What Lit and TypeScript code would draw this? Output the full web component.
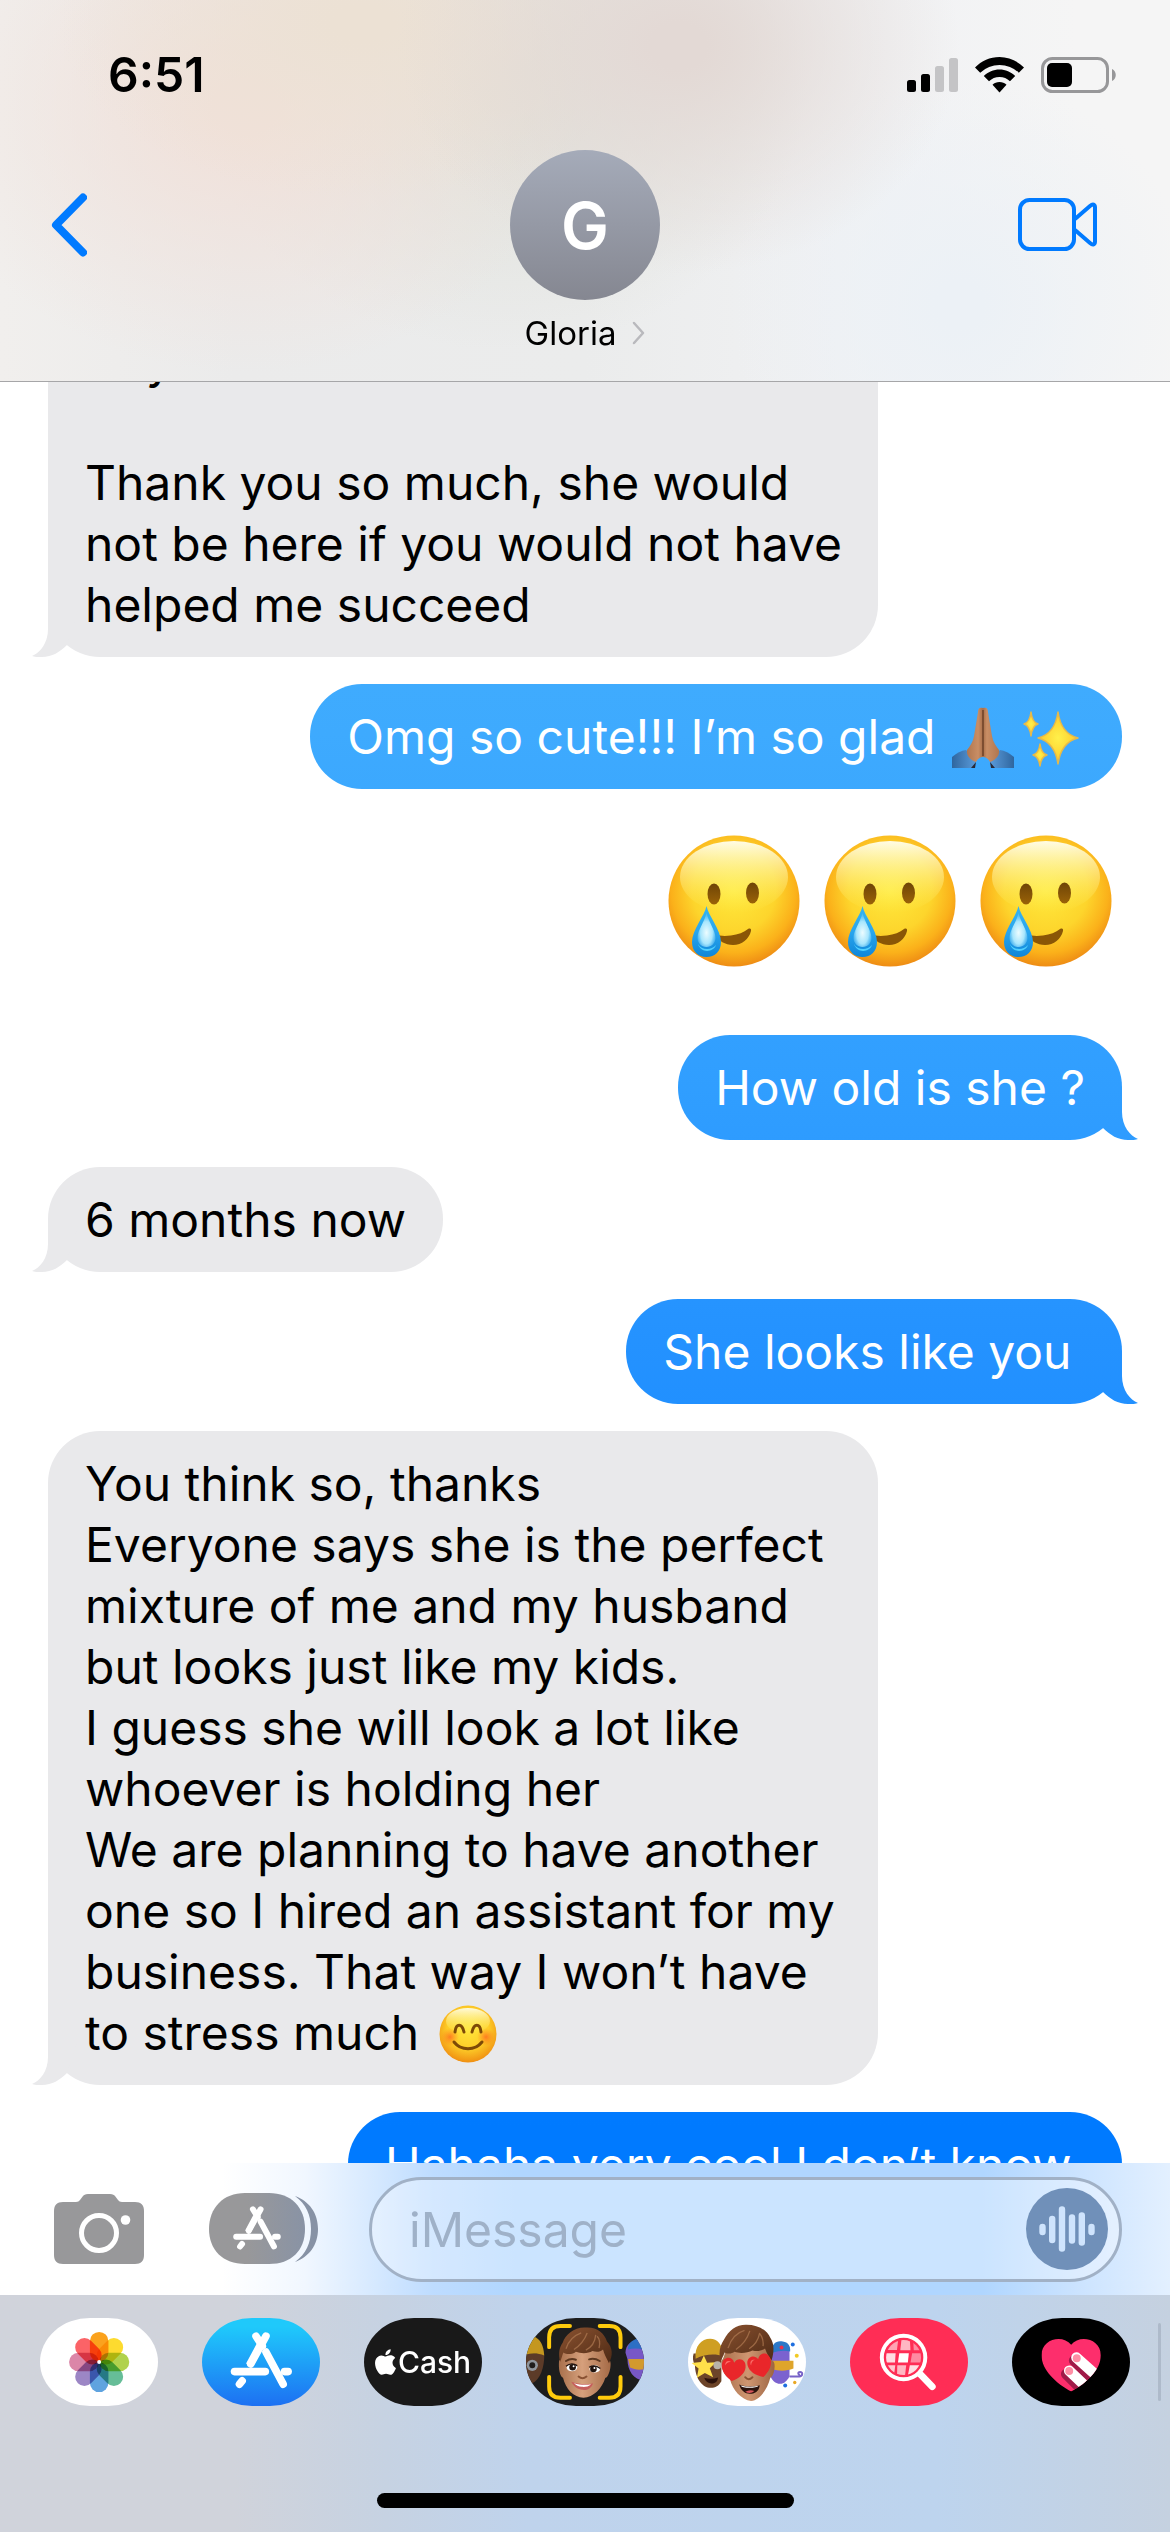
import { LitElement, html, svg, css } from "lit";
import type { TemplateResult } from "lit";
import { customElement, property } from "lit/decorators.js";
import { classMap } from "lit/directives/class-map.js";

/* ---------- Emoji drawings (no outer whitespace: bubbles keep line breaks) ---------- */

const tearEmoji = html`<svg class="emoji-big" viewBox="0 0 132 132" role="img" aria-label="Smiling face with tear">
    <defs>
      <radialGradient id="t-face" cx="50%" cy="42%" r="58%">
        <stop offset="0" stop-color="#ffea3d" />
        <stop offset=".55" stop-color="#fdd52c" />
        <stop offset=".82" stop-color="#fbb11a" />
        <stop offset="1" stop-color="#ee8c14" />
      </radialGradient>
      <linearGradient id="t-shine" x1="0" y1="0" x2="0" y2="1">
        <stop offset="0" stop-color="#fffff0" stop-opacity=".95" />
        <stop offset="1" stop-color="#fff45c" stop-opacity="0" />
      </linearGradient>
      <linearGradient id="t-eye" x1="0" y1="0" x2="0" y2="1">
        <stop offset="0" stop-color="#6f4506" />
        <stop offset="1" stop-color="#9a6208" />
      </linearGradient>
      <linearGradient id="t-tear" x1="0" y1="0" x2="0" y2="1">
        <stop offset="0" stop-color="#35b4f0" />
        <stop offset=".5" stop-color="#2aa6ee" />
        <stop offset="1" stop-color="#0f86d8" />
      </linearGradient>
      <radialGradient id="t-tear-in" cx="50%" cy="58%" r="55%">
        <stop offset="0" stop-color="#ecfcff" />
        <stop offset=".6" stop-color="#a8e6fd" />
        <stop offset="1" stop-color="#7fd2fa" stop-opacity=".3" />
      </radialGradient>
    </defs>
    <circle cx="66" cy="66" r="65.5" fill="url(#t-face)" />
    <ellipse cx="66" cy="42" rx="54" ry="36" fill="url(#t-shine)" />
    <ellipse cx="46" cy="59" rx="6.5" ry="10.5" fill="url(#t-eye)" />
    <ellipse cx="84.5" cy="58" rx="6.5" ry="10.5" fill="url(#t-eye)" />
    <path d="M46 99c6 2 10 2.500 17 1.500 7-1 13-3 17-6.500 2.500-1 3.500 0 3 2-2 8-9 14-18 14-8 0-14-4-19-11z" fill="#8a5606" />
    <path d="M38.500 71c2 10 14.500 24 14.500 36 0 9-6 15-14.500 15S24 116 24 107c0-12 12.500-26 14.500-36z" fill="url(#t-tear)" />
    <path d="M38.500 78c2 9 9 17 9 25 0 5-4 9-9 9s-9-4-9-9c0-8 7-16 9-25z" fill="url(#t-tear-in)" />
    <path d="M30 109c3 6 13 7 18 1-2 7-15 9-18-1z" fill="#4fd0ff" />
  </svg>`;

const blushEmoji = html`<svg class="emoji" viewBox="0 0 62 62" role="img" aria-label="Smiling face with smiling eyes">
    <defs>
      <radialGradient id="b-face" cx="50%" cy="40%" r="60%">
        <stop offset="0" stop-color="#ffe73c" />
        <stop offset=".6" stop-color="#fdcd28" />
        <stop offset="1" stop-color="#f08f12" />
      </radialGradient>
      <linearGradient id="b-shine" x1="0" y1="0" x2="0" y2="1">
        <stop offset="0" stop-color="#fffff0" stop-opacity=".9" />
        <stop offset="1" stop-color="#fff45c" stop-opacity="0" />
      </linearGradient>
      <radialGradient id="b-cheek">
        <stop offset="0" stop-color="#ff5a1c" stop-opacity=".7" />
        <stop offset="1" stop-color="#ff7a1c" stop-opacity="0" />
      </radialGradient>
    </defs>
    <circle cx="32" cy="31" r="28.500" fill="url(#b-face)" />
    <ellipse cx="32" cy="18" rx="22" ry="13" fill="url(#b-shine)" />
    <circle cx="14" cy="34" r="9" fill="url(#b-cheek)" />
    <circle cx="50" cy="34" r="9" fill="url(#b-cheek)" />
    <g fill="none" stroke="#7d4a07" stroke-width="3" stroke-linecap="round">
      <path d="M19 29c1-9 7-9 9 0M36 29c2-9 8-9 9 0" />
      <path d="M18 39c7 9 21 9 28 0" />
    </g>
  </svg>`;

const prayEmoji = html`<svg class="emoji" viewBox="0 0 62 62" role="img" aria-label="Folded hands">
    <defs>
      <linearGradient id="p-skin" x1="0" y1="0" x2="1" y2="0">
        <stop offset="0" stop-color="#b0764f" />
        <stop offset=".35" stop-color="#c98e65" />
        <stop offset=".5" stop-color="#a86f4a" />
        <stop offset=".62" stop-color="#c98e65" />
        <stop offset="1" stop-color="#b0764f" />
      </linearGradient>
      <linearGradient id="p-cuff-l" x1="0" y1="0" x2="1" y2="0">
        <stop offset="0" stop-color="#2f669f" />
        <stop offset="1" stop-color="#5b9bda" />
      </linearGradient>
      <linearGradient id="p-cuff-r" x1="1" y1="0" x2="0" y2="0">
        <stop offset="0" stop-color="#2f669f" />
        <stop offset="1" stop-color="#5b9bda" />
      </linearGradient>
    </defs>
    <path d="M0 50q7-6 14-7l10 12-3 6H0z" fill="url(#p-cuff-l)" />
    <path d="M62 50q-7-6-14-7L38 55l3 6h21z" fill="url(#p-cuff-r)" />
    <path d="M24 55l-5 6h4zM38 55l5 6h-4z" fill="#2a2a38" />
    <path d="M31 1c-3-1-5 0-5 4l-4 24c-1 6-4 10-7 14-1 6 4 10 9 12 2-4 5-5 7-5s5 1 7 5c5-2 10-6 9-12-3-4-6-8-7-14L36 5c0-4-2-5-5-4z" fill="url(#p-skin)" />
    <path d="M31 3v46" stroke="#6e4229" stroke-width="1.500" />
  </svg>`;

const star = (cx: number, cy: number, rx: number, ry: number) => svg`
  <path
    d="M${cx} ${cy - ry}Q${cx + rx * 0.16} ${cy - ry * 0.16} ${cx + rx} ${cy}Q${cx + rx * 0.16} ${cy + ry * 0.16} ${cx} ${cy + ry}Q${cx - rx * 0.16} ${cy + ry * 0.16} ${cx - rx} ${cy}Q${cx - rx * 0.16} ${cy - ry * 0.16} ${cx} ${cy - ry}z"
    fill="url(#s-gold)" stroke="#e6b94a" stroke-width="1.500" stroke-linejoin="round" />
`;

const sparkleEmoji = html`<svg class="emoji" viewBox="0 0 62 62" role="img" aria-label="Sparkles">
    <defs>
      <radialGradient id="s-gold">
        <stop offset="0" stop-color="#fff04a" />
        <stop offset="1" stop-color="#fdc92a" />
      </radialGradient>
    </defs>
    ${star(38, 31, 20, 26)} ${star(11, 17, 7, 12)} ${star(20, 48, 7, 11)}
  </svg>`;

/* ---------- Interface icons ---------- */

const signalIcon = html`
  <svg width="51" height="36" viewBox="0 0 51 36" aria-hidden="true">
    <rect x="0" y="23" width="9" height="12" rx="2.500" />
    <rect x="14" y="17" width="9" height="18" rx="2.500" />
    <rect x="28" y="9" width="9" height="26" rx="2.500" fill="#c4c4c6" />
    <rect x="42" y="1" width="9" height="34" rx="2.500" fill="#c4c4c6" />
  </svg>
`;

const wifiIcon = html`
  <svg width="49" height="36" viewBox="0 0 49 36" aria-hidden="true">
    <path d="M24.500 0C34 0 42.500 4 49 10.500L43.800 15.700A28 28 0 0 0 5.200 15.700L0 10.500C6.500 4 15 0 24.500 0z" />
    <path d="M24.500 12.500c6 0 11.500 2.400 15.700 6.500L35 24.200a15 15 0 0 0-21 0L8.800 19c4.200-4.100 9.700-6.500 15.700-6.500z" />
    <path d="M24.500 25c2.700 0 5.200 1 7 2.800l-7 7.700-7-7.700c1.800-1.800 4.300-2.800 7-2.800z" />
  </svg>
`;

const batteryIcon = html`
  <svg width="75" height="36" viewBox="0 0 75 36" aria-hidden="true">
    <rect x="1.500" y="1.500" width="65" height="33" rx="10" fill="none" stroke="#979799" stroke-width="3" />
    <rect x="6" y="6" width="25" height="24" rx="5" />
    <path d="M71 12c5 2 5 10 0 12z" fill="#979799" />
  </svg>
`;

const backIcon = html`
  <svg width="36" height="64" viewBox="0 0 36 64" aria-hidden="true">
    <path d="M32 4.500 5 32l27 27.500" fill="none" stroke="#007aff" stroke-width="8" stroke-linecap="round" stroke-linejoin="round" />
  </svg>
`;

const videoIcon = html`
  <svg width="80" height="54" viewBox="0 0 80 54" aria-hidden="true">
    <g fill="none" stroke="#007aff" stroke-width="4" stroke-linejoin="round">
      <rect x="2" y="2" width="54" height="49" rx="9.500" />
      <path d="M57 21 72 8c3-2.500 5-1.500 5 1.500v34c0 3-2 4-5 1.500L57 32" />
    </g>
  </svg>
`;

const nameChevron = html`
  <svg width="13" height="24" viewBox="0 0 13 24" aria-hidden="true">
    <path d="M2 2l9 10-9 10" fill="none" stroke="#b9b9bd" stroke-width="2.500" stroke-linecap="round" stroke-linejoin="round" />
  </svg>
`;

const cameraIcon = html`
  <svg width="90" height="70" viewBox="0 0 90 70" aria-hidden="true">
    <path fill="#98989a" d="M9 8h13c2 0 3-1 4-2l3-4c1-1 2-2 5-2h22c3 0 4 1 5 2l3 4c1 1 2 2 4 2h13c6 0 9 3 9 9v44c0 6-3 9-9 9H9c-6 0-9-3-9-9V17c0-6 3-9 9-9z" />
    <circle cx="45" cy="39" r="17.500" fill="none" stroke="#fff" stroke-width="5" />
    <circle cx="71.500" cy="26" r="4.800" fill="#fff" />
  </svg>
`;

/* The crossed "A" shared by the drawer button and the App Store tile. */
const storeGlyph = svg`
  <g fill="none" stroke="#fff" stroke-width="23" stroke-linecap="round">
    <path d="M798 138 752 222" />
    <path d="M768 138 787 168" />
    <path d="M798 186 850 283" />
    <path d="M703 245H796" />
    <path d="M854 245H865" />
    <path d="M726 273 718 283" />
    <path d="M780 166 748 226" stroke-linecap="butt" />
  </g>
`;

const drawerIcon = html`
  <svg width="110" height="72" viewBox="0 0 110 72" aria-hidden="true">
    <defs>
      <linearGradient id="d-fill" x1="0" y1="0" x2="1" y2="0">
        <stop offset=".4" stop-color="#98989a" />
        <stop offset="1" stop-color="#8993a5" />
      </linearGradient>
    </defs>
    <path d="M36 0H60C82 0 96 14 96 36S82 71 60 71H36C14 71 0 57 0 36S14 0 36 0z" fill="url(#d-fill)" />
    <path d="M86 3c14 5 23 17 23 33s-9 28-23 33c11-8 16-19 16-33S97 11 86 3z" fill="#8792a5" />
    <g transform="translate(48 35) scale(.257) translate(-784 -211)">${storeGlyph}</g>
  </svg>
`;

const voiceIcon = html`
  <svg width="82" height="82" viewBox="0 0 82 82" aria-hidden="true">
    <circle cx="41" cy="41" r="41" fill="#7090b9" />
    <g stroke="#cfe4fd" stroke-width="6.400" stroke-linecap="round">
      <path d="M16.500 39v5M26.200 31v21M36 21.500v39M46 29.500v23M55.800 27.500v27M65.500 39v5" />
    </g>
  </svg>
`;

/* ---------- App tiles ---------- */

const petals = ["#fba21d", "#fddb2f", "#b0d24d", "#66bd98", "#5fa3df", "#9c86c5", "#db86a8", "#fb6367"];

const photosTile = html`
  <svg class="art" viewBox="119 83 355 266" aria-hidden="true">
    <g transform="translate(297 216)">
      ${petals.map(
        (fill, i) => svg`
          <rect class="petal" x="-28" y="-91" width="56" height="90" rx="28" fill=${fill} transform="rotate(${i * 45})" />
        `,
      )}
      <circle r="6" fill="#fff" />
    </g>
  </svg>
`;

const storeTile = html`
  <svg class="art" viewBox="605 83 356 266" aria-hidden="true">${storeGlyph}</svg>
`;

const cashTile = html`
  <svg width="21" height="26" viewBox="2.200 0 19.600 24" aria-hidden="true">
    <path
      fill="#fff"
      d="M12.152 6.896c-.948 0-2.415-1.078-3.96-1.040-2.040.027-3.910 1.183-4.961 3.014-2.117 3.675-.546 9.103 1.519 12.090 1.013 1.454 2.208 3.090 3.792 3.039 1.520-.065 2.090-.987 3.935-.987 1.831 0 2.350.987 3.960.948 1.637-.026 2.676-1.480 3.676-2.948 1.156-1.688 1.636-3.325 1.662-3.415-.039-.013-3.182-1.221-3.220-4.857-.026-3.040 2.480-4.494 2.597-4.559-1.429-2.090-3.623-2.324-4.390-2.376-2-.156-3.675 1.090-4.610 1.090zM15.530 3.830c.843-1.012 1.400-2.427 1.245-3.830-1.207.052-2.662.805-3.532 1.818-.780.896-1.454 2.338-1.273 3.714 1.338.104 2.715-.688 3.559-1.701"
    />
  </svg>
  <span class="cash-word">Cash</span>
`;

const memojiTile = html`
  <svg class="art" viewBox="77 83 357 266" aria-hidden="true">
    <defs>
      <linearGradient id="m-skin" x1="0" y1="0" x2="1" y2="0">
        <stop offset="0" stop-color="#a8704c" />
        <stop offset=".45" stop-color="#d6a07c" />
        <stop offset="1" stop-color="#a56b47" />
      </linearGradient>
      <linearGradient id="m-hair" x1="0" y1="0" x2="1" y2="1">
        <stop offset="0" stop-color="#8a5230" />
        <stop offset="1" stop-color="#4e2a15" />
      </linearGradient>
    </defs>
    <path d="M70 190h62c2 36-10 78-36 90H70z" fill="#5c3b28" />
    <path d="M70 150c10-12 22-16 30-12 20 8 31 28 32 58-20-8-42-8-62 0z" fill="#c4971f" />
    <circle cx="96" cy="226" r="17" fill="#8f959c" />
    <circle cx="96" cy="226" r="9" fill="#1f1d1c" />
    <path d="M378 188c0-26 20-42 60-40v126c-34-2-54-30-54-66z" fill="#7857c6" />
    <path d="M385 178c0-22 22-38 54-34v36c-20-6-38-6-54-2z" fill="#2d6fc4" />
    <path d="M386 207h52v30c-18 4-34 2-46-4z" fill="#d29a2e" />
    <path d="M177 212c4-4 8-10 12-40h132c4 20 6 40 10 40 6 10-2 50-14 52-10 32-36 60-66 60s-54-26-62-60c-10-6-14-28-12-52z" fill="url(#m-skin)" />
    <path d="M180 216c-6-26-2-44 8-58 8-24 34-47 68-46 34-3 58 16 66 42 18 20 18 42 6 66-6-14-14-26-18-42-8 8-20 8-32 5-12 8-36 8-50 2-8 8-28 10-38 2-4 10-6 20-10 29z" fill="url(#m-hair)" />
    <g fill="none" stroke="#b07a52" stroke-width="4" opacity=".7">
      <path d="M198 176c8-26 24-40 46-48M222 178c18-12 32-28 40-50M258 180c16-8 28-26 30-46M298 174c4-16 2-28-6-36" />
    </g>
    <path d="M198 213q14-9 30-4M268 208q16-5 32 5" fill="none" stroke="#5d3820" stroke-width="6" stroke-linecap="round" />
    <ellipse cx="216" cy="233" rx="16" ry="11" fill="#fff" />
    <ellipse cx="285" cy="237" rx="16" ry="11" fill="#fff" />
    <circle cx="218" cy="232" r="10" fill="#20130e" />
    <circle cx="281" cy="237" r="10" fill="#20130e" />
    <circle cx="221" cy="229" r="3" fill="#fff" />
    <circle cx="284" cy="234" r="3" fill="#fff" />
    <path d="M198 229q16-14 34-2M268 232q18-10 34 4" fill="none" stroke="#20130e" stroke-width="4" />
    <path d="M236 260q12 10 24 0" fill="none" stroke="#8a5233" stroke-width="6" stroke-linecap="round" />
    <path d="M214 276c20 8 48 10 66 4-6 18-20 22-34 20-16-2-26-12-32-24z" fill="#c65f5c" />
    <path d="M222 280c18 5 36 6 52 3-8 8-20 9-28 8-10-1-18-5-24-11z" fill="#fff" />
    <g fill="none" stroke="#ffcb0c" stroke-width="12" stroke-linecap="round">
      <path d="M147 171v-30q0-34 34-34h29M300 107h29q34 0 34 34v30M147 261v29q0 34 34 34h29M300 324h29q34 0 34-34v-29" />
    </g>
  </svg>
`;

const heart = (x: number, y: number, turn: number) => svg`
  <path transform="translate(${x} ${y}) rotate(${turn})" fill="#e9262a"
    d="M0 36C-22 24-36 8-36-10c0-26 28-30 36-10 8-20 36-16 36 10C36 8 22 24 0 36z" />
  <path transform="translate(${x} ${y}) rotate(${turn})" fill="#ff8078" opacity=".8"
    d="M-26-8c-2-14 8-18 16-13-8 0-13 5-16 13z" />
`;

const stickerTile = html`
  <svg class="art" viewBox="563 83 357 266" aria-hidden="true">
    <defs>
      <linearGradient id="s-skin" x1="0" y1="0" x2="1" y2="0">
        <stop offset="0" stop-color="#a8704c" />
        <stop offset=".5" stop-color="#cf9671" />
        <stop offset="1" stop-color="#9c6442" />
      </linearGradient>
      <linearGradient id="s-hair" x1="0" y1="0" x2="1" y2="1">
        <stop offset="0" stop-color="#8a5230" />
        <stop offset="1" stop-color="#4e2a15" />
      </linearGradient>
    </defs>
    <path d="M580 190h84v84c-8 14-18 20-32 20-26 0-48-30-48-70-6-8-8-22-4-34z" fill="#6c4429" />
    <path d="M586 206c-4-38 18-60 44-60 22 0 36 14 40 52-26-8-56-6-84 8z" fill="#cf9f22" />
    <path d="M611 196l10 22 27-1-19 18 10 27-25-13-24 15 5-28-21-17 28-3z" fill="#ffe04a" />
    <circle cx="652" cy="226" r="12" fill="#b9b3a8" />
    <path d="M612 264c14 4 28 4 42-1-2 14-10 18-20 18s-18-6-22-17z" fill="#2c130d" />
    <path d="M820 170h50v90c-8 14-16 22-28 22-16 0-28-14-32-30z" fill="#7b62cf" />
    <path d="M818 188c-4-30 14-38 32-34 16 2 24 14 22 30-18-4-36-2-54 4z" fill="#2b78c8" />
    <path d="M818 212h64v24c-20 8-44 8-64 2z" fill="#dfa52b" />
    <path d="M870 260h30c10 0 12-14 2-14-8 0-6 10 0 8" fill="none" stroke="#7763c8" stroke-width="6" />
    <circle cx="846" cy="172" r="6" fill="#e9304c" />
    <circle cx="880" cy="163" r="6" fill="#1f6fe0" />
    <circle cx="892" cy="197" r="6" fill="#f2ca24" />
    <circle cx="857" cy="287" r="6" fill="#1f6fe0" />
    <circle cx="886" cy="278" r="5" fill="#e9a824" />
    <path d="M664 214c4-6 10-16 14-42h130c6 20 6 36 12 42 10 4 4 46-8 50-8 34-32 68-58 70-30-4-56-34-64-66-16-8-26-32-26-54z" fill="url(#s-skin)" />
    <path d="M662 214c-8-26-2-48 10-66 14-28 38-46 68-45 36 0 64 18 72 40 12 18 12 40 4 68-8-10-14-20-20-36-12 8-24 10-38 6-14 8-40 10-54 4-8 6-20 8-30 2-4 10-8 18-12 27z" fill="url(#s-hair)" />
    <g fill="none" stroke="#b07a52" stroke-width="4" opacity=".7">
      <path d="M684 174c8-26 22-46 50-54M708 178c18-12 34-30 42-56M748 176c16-10 28-28 32-48M790 168c2-16-2-28-10-38" />
    </g>
    <path d="M736 262q10 12 22 0" fill="none" stroke="#8a5233" stroke-width="6" stroke-linecap="round" />
    <path d="M718 284c20 8 44 8 62 2-2 20-16 26-30 26s-28-10-32-28z" fill="#2c130d" />
    <path d="M722 287c18 5 38 5 54 1-4 8-50 9-54-1z" fill="#fff" />
    <path d="M736 306q14-8 28-2-12 10-28 2z" fill="#d4545a" />
    ${heart(700, 238, 8)} ${heart(781, 227, -16)}
  </svg>
`;

const searchTile = html`
  <svg class="art" viewBox="89 472 357 267" aria-hidden="true">
    <defs><clipPath id="lens"><circle cx="251" cy="592" r="53" /></clipPath></defs>
    <circle cx="251" cy="592" r="66" fill="none" stroke="#fff" stroke-width="12" />
    <path d="M303 644l35 36" stroke="#fff" stroke-width="21" stroke-linecap="round" />
    <g clip-path="url(#lens)">
      <path d="M196 535h39l-4 34h-35z" fill="#ffa3b3" />
      <path d="M245 535h25l2 35h-31z" fill="#ffb7c3" />
      <path d="M280 535h30v35h-28z" fill="#ff8aa1" />
      <path d="M196 579h31l-2 28h-29z" fill="#ffdde2" />
      <path d="M238 579h29l-3 28h-30z" fill="#fff" />
      <path d="M277 579h30v28h-35z" fill="#ff8aa1" />
      <path d="M196 615h30l-4 30h-26z" fill="#ffc8d0" />
      <path d="M232 615h27l-4 35h-24z" fill="#ffb7c3" />
      <path d="M270 615h34v32h-40z" fill="#ffdfe4" />
    </g>
  </svg>
`;

const heartTile = html`
  <svg class="art" viewBox="574 472 357 267" aria-hidden="true">
    <defs>
      <clipPath id="big-heart">
        <path d="M753 695c-44-24-90-64-90-110 0-50 64-64 90-32 26-32 90-18 90 32 0 46-46 86-90 110z" />
      </clipPath>
    </defs>
    <g clip-path="url(#big-heart)">
      <rect x="660" y="530" width="190" height="170" fill="#fd2e6c" />
      <path d="M762 601l70 72M738 642l60 60" stroke="#a01a48" stroke-width="32" stroke-linecap="round" />
      <path d="M769 592l80 72M747 632l80 76" stroke="#fff" stroke-width="32" stroke-linecap="round" />
      <circle cx="770" cy="594" r="12" fill="#ff8ea5" />
      <circle cx="747" cy="633" r="12" fill="#ff8ea5" />
    </g>
  </svg>
`;

interface AppTile {
  id: string;
  label: string;
  art: TemplateResult;
}

const tiles: AppTile[] = [
  { id: "photos", label: "Photos", art: photosTile },
  { id: "store", label: "App Store", art: storeTile },
  { id: "cash", label: "Apple Cash", art: cashTile },
  { id: "memoji", label: "Memoji", art: memojiTile },
  { id: "stickers", label: "Memoji stickers", art: stickerTile },
  { id: "search", label: "Image search", art: searchTile },
  { id: "touch", label: "Digital Touch", art: heartTile },
];

/* ---------- Conversation ---------- */

interface Message {
  from: "me" | "them";
  body: TemplateResult | string;
  tail?: boolean;
  bare?: boolean;
  /* Wrapped paragraphs fill the widest bubble. */
  long?: boolean;
}

const messages: Message[] = [
  {
    from: "them",
    tail: true,
    long: true,
    body: "Any\n\nThank you so much, she would not be here if you would not have helped me succeed",
  },
  { from: "me", body: html`Omg so cute!!! I’m so glad ${prayEmoji}${sparkleEmoji}` },
  { from: "me", bare: true, body: html`${tearEmoji}${tearEmoji}${tearEmoji}` },
  { from: "me", tail: true, body: "How old is she ?" },
  { from: "them", tail: true, body: "6 months now" },
  { from: "me", tail: true, body: "She looks like you\u00a0" },
  {
    from: "them",
    tail: true,
    long: true,
    body: html`${"You think so, thanks\nEveryone says she is the perfect mixture of me and my husband but looks just like my kids.\nI guess she will look a lot like whoever is holding her\nWe are planning to have another one so I hired an assistant for my business. That way I won’t have to stress much "}${blushEmoji}`,
  },
  { from: "me", body: "Hahaha very cool I don’t know\u00a0" },
];

@customElement("chat-bubble")
export class ChatBubble extends LitElement {
  @property({ attribute: false }) message!: Message;

  static styles = css`
    :host {
      display: flex;
      flex-direction: column;
    }
    .bubble {
      position: relative;
      align-self: flex-start;
      max-width: 830px;
      box-sizing: border-box;
      padding: 22px 37px;
      border-radius: 52px;
      background: #e9e9eb;
      color: #000;
      font-size: 48px;
      line-height: 61px;
      white-space: pre-line;
    }
    .long {
      padding-right: 24px;
    }
    .me {
      align-self: flex-end;
      color: #fff;
      background: linear-gradient(#48b5fb 10%, #3eaafe 29%, #309eff 43%, #2492ff 53%, #007aff 84%) fixed;
    }
    .tail::after {
      content: "";
      position: absolute;
      bottom: 0;
      left: -16px;
      width: 48px;
      height: 52px;
      background: inherit;
      clip-path: path("M16 0V24C16 38 8 48 0 51C2 52 6 52 10 52C20 52 28 47 35 40L48 0Z");
    }
    .me.tail::after {
      left: auto;
      right: -16px;
      clip-path: path("M32 0V24C32 38 40 48 48 51C46 52 42 52 38 52C28 52 20 47 13 40L0 0Z");
    }
    .bare {
      align-self: flex-end;
      display: flex;
      gap: 24px;
      padding: 19px 10px 41px;
    }
    .emoji {
      width: 62px;
      height: 62px;
      margin: -15px 3px -9px;
      vertical-align: middle;
    }
    .emoji-big {
      width: 132px;
      height: 132px;
    }
  `;

  render() {
    const { from, tail, bare, long, body } = this.message;
    if (bare) return html`<div class="bare">${body}</div>`;
    return html`<div class=${classMap({ bubble: true, me: from === "me", tail: !!tail, long: !!long })}>${body}</div>`;
  }
}

@customElement("app-root")
export class AppRoot extends LitElement {
  static styles = css`
    :host {
      display: flex;
      flex-direction: column;
      height: 100vh;
      overflow: hidden;
      background: #fff;
      color: #000;
      font-family: Inter, "Liberation Sans", sans-serif;
    }
    button {
      border: 0;
      padding: 0;
      background: none;
      font: inherit;
      color: inherit;
    }
    svg {
      display: block;
      flex: none;
    }

    .header {
      flex: none;
      height: 381px;
      border-bottom: 1px solid #a6a6a8;
      background:
        radial-gradient(ellipse 24% 60% at 58% 12%, #e3d9d5 10%, #e3d9d500 100%),
        radial-gradient(ellipse 26% 46% at 31% 6%, #ece1d4 10%, #ece1d400 100%),
        radial-gradient(ellipse 28% 70% at 21% 28%, #f1e1da 10%, #f1e1da00 100%),
        radial-gradient(ellipse 26% 70% at 43% 22%, #e0e1da 10%, #e0e1da00 100%),
        radial-gradient(ellipse 20% 60% at 82% 80%, #ecf1f6 10%, #ecf1f600 100%),
        linear-gradient(90deg, #f1efed, #ebebeb 20%, #ebecec 50%, #f1f2f4 76%, #f5f5f5 92%);
    }
    .status {
      display: flex;
      align-items: center;
      justify-content: space-between;
      height: 150px;
      padding: 0 54px 0 108px;
      box-sizing: border-box;
    }
    .time {
      font-size: 48px;
      font-weight: 600;
      line-height: 56px;
    }
    .indicators {
      display: flex;
      gap: 17px;
    }
    .nav {
      display: grid;
      grid-template-columns: 1fr auto 1fr;
      align-items: start;
      padding: 0 51px;
    }
    .nav-button {
      display: flex;
      align-items: center;
      height: 150px;
    }
    .video {
      justify-self: end;
      margin-right: 21px;
    }
    .contact {
      display: flex;
      flex-direction: column;
      align-items: center;
      gap: 13px;
    }
    .avatar {
      display: grid;
      place-items: center;
      width: 150px;
      height: 150px;
      border-radius: 50%;
      background: linear-gradient(#a5abb9, #858791);
      color: #fff;
      font-size: 64px;
      font-weight: 600;
    }
    .name {
      display: flex;
      align-items: center;
      gap: 16px;
      font-size: 33px;
      line-height: 40px;
    }

    .thread {
      flex: 1;
      min-height: 0;
      overflow: hidden;
    }
    .list {
      display: flex;
      flex-direction: column;
      gap: 27px;
      margin: -74px 0 0;
      padding: 0 48px;
      list-style: none;
    }

    .composer {
      flex: none;
      display: flex;
      align-items: center;
      height: 132px;
      padding: 0 48px 0 54px;
      background: linear-gradient(90deg, #fff 19%, #f1f7ff 26%, #d6e9ff 32%, #bedcff 37%, #b0d6ff 44%, #b0d6ff 84%, #cbe3ff 92%, #e3f0ff);
    }
    .drawer {
      margin-left: 65px;
    }
    .field {
      flex: 1;
      min-width: 0;
      display: flex;
      align-items: center;
      height: 105px;
      box-sizing: border-box;
      margin-left: 50px;
      padding: 0 11px 0 37px;
      border: 3px solid #a1b1c6;
      border-radius: 53px;
      background: #ffffff58;
    }
    .input {
      flex: 1;
      min-width: 0;
      border: 0;
      padding: 0;
      outline: none;
      background: none;
      font: inherit;
      font-size: 48px;
      line-height: 61px;
    }
    .input::placeholder {
      color: #9fb1c8;
      opacity: 1;
    }

    .apps {
      flex: none;
      display: flex;
      flex-direction: column;
      justify-content: space-between;
      align-items: center;
      height: 237px;
      box-sizing: border-box;
      padding: 23px 0 24px;
      background: linear-gradient(90deg, #d0d3db 20%, #c6d2e2 33%, #bfd3ec 45%, #bdd4ee 80%, #c5d1e0);
    }
    .strip {
      align-self: stretch;
      display: flex;
      align-items: center;
      gap: 44px;
      padding-left: 40px;
      overflow: hidden;
    }
    .tile {
      flex: none;
      display: flex;
      align-items: center;
      justify-content: center;
      gap: 2px;
      width: 118px;
      height: 88px;
      border-radius: 50px / 44px;
      overflow: hidden;
      background: #fff;
    }
    .art {
      width: 118px;
      height: 88px;
    }
    .petal {
      mix-blend-mode: multiply;
    }
    .store {
      background: linear-gradient(#1fc9fb 10%, #1d70f2);
    }
    .cash {
      background: #191919;
      color: #fff;
    }
    .cash-word {
      font-size: 30px;
      font-weight: 500;
      line-height: 36px;
    }
    .memoji {
      background: #1d1d1d;
    }
    .search {
      background: #ff2d55;
    }
    .touch {
      background: #000;
    }
    .edge {
      flex: none;
      width: 3px;
      height: 78px;
      margin-left: -16px;
      border-radius: 2px;
      background: #aebaca;
    }
    .home {
      width: 417px;
      height: 15px;
      border-radius: 8px;
      background: #000;
    }
  `;

  render() {
    return html`
      <header class="header">
        <div class="status">
          <span class="time">6:51</span>
          <div class="indicators">${signalIcon}${wifiIcon}${batteryIcon}</div>
        </div>
        <nav class="nav">
          <button class="nav-button" aria-label="Back">${backIcon}</button>
          <button class="contact">
            <span class="avatar">G</span>
            <span class="name">Gloria ${nameChevron}</span>
          </button>
          <button class="nav-button video" aria-label="Video call">${videoIcon}</button>
        </nav>
      </header>

      <main class="thread">
        <ol class="list">
          ${messages.map((m) => html`<li><chat-bubble .message=${m}></chat-bubble></li>`)}
        </ol>
      </main>

      <form class="composer" @submit=${(e: Event) => e.preventDefault()}>
        <button type="button" aria-label="Camera">${cameraIcon}</button>
        <button type="button" class="drawer" aria-label="Apps">${drawerIcon}</button>
        <div class="field">
          <input class="input" type="text" placeholder="iMessage" aria-label="Message" />
          <button type="button" aria-label="Record audio">${voiceIcon}</button>
        </div>
      </form>

      <footer class="apps">
        <div class="strip">
          ${tiles.map((t) => html`<button class="tile ${t.id}" aria-label=${t.label}>${t.art}</button>`)}
          <span class="edge"></span>
        </div>
        <span class="home"></span>
      </footer>
    `;
  }
}
